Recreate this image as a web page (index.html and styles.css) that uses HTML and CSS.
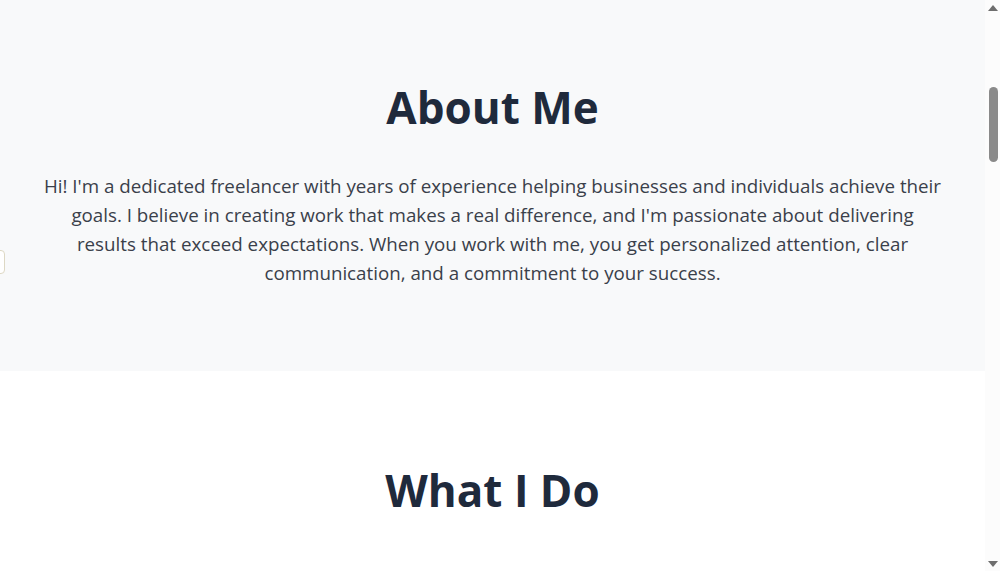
FILE: index.html
```html
<!DOCTYPE html>
<html lang="en">
<head>
  <meta charset="utf-8">
  <title>Freelancer</title>
  <link rel="stylesheet" href="styles.css">
</head>
<body>

  <div class="side-tab"></div>

  <section class="about">
    <h2>About Me</h2>
    <p>Hi! I'm a dedicated freelancer with years of experience helping businesses and individuals achieve their goals. I believe in creating work that makes a real difference, and I'm passionate about delivering results that exceed expectations. When you work with me, you get personalized attention, clear communication, and a commitment to your success.</p>
  </section>

  <section class="services">
    <h2>What I Do</h2>
  </section>

  <!-- window scrollbar, as it shows in the capture -->
  <div class="scrollbar">
    <span class="arrow up"></span>
    <span class="thumb"></span>
    <span class="arrow down"></span>
  </div>

</body>
</html>
```

FILE: styles.css
```css
body {
  margin: 0 15px 0 0;
  font-family: "Open Sans", "Noto Sans", sans-serif;
  color: #3a404a;
  background: #fff;
}

section {
  text-align: center;
  padding: 0 20px;
}

h2 {
  margin: 0;
  font-size: 44px;
  line-height: 1.2;
  font-weight: 700;
  color: #1f2a3c;
}

.about {
  background-color: #f8f9fa;
  padding-top: 81px;
  padding-bottom: 84px;
}

.about h2 {
  margin-bottom: 37px;
}

.about p {
  max-width: 900px;
  margin: 0 auto;
  font-size: 18.75px;
  line-height: 29px;
}

.services {
  padding-top: 93px;
  padding-bottom: 120px;
}

/* little tab peeking in from the left edge */
.side-tab {
  position: fixed;
  left: -30px;
  top: 250px;
  width: 33px;
  height: 22px;
  background: #fff;
  border: 1px solid #ddd8c4;
  border-radius: 4px;
}

.scrollbar {
  position: fixed;
  top: 0;
  right: 0;
  bottom: 0;
  width: 15px;
  background: #fcfcfc;
  display: flex;
  flex-direction: column;
  align-items: center;
}

.arrow {
  width: 0;
  height: 0;
  border-left: 5px solid transparent;
  border-right: 5px solid transparent;
}

.arrow.up {
  margin-top: 5px;
  border-bottom: 6px solid #6e6e6e;
}

.arrow.down {
  margin-top: auto;
  margin-bottom: 4px;
  border-top: 6px solid #6e6e6e;
}

.thumb {
  width: 9px;
  height: 75px;
  margin-top: 76px;
  margin-left: 1px;
  border-radius: 5px;
  background: #8a8a8a;
}
```
